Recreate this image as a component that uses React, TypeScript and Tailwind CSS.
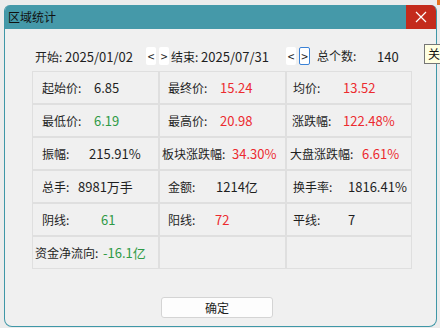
import React from "react";

interface Cell {
  label: string;
  value: string;
  color?: "red" | "green";
  pl: number;
  lw: number;
}

const font = { fontFamily: '"Noto Sans CJK SC", "Noto Sans", sans-serif' };

const rows: Cell[][] = [
  [
    { label: "起始价:", value: "6.85", pl: 9, lw: 52 },
    { label: "最终价:", value: "15.24", color: "red", pl: 8, lw: 52 },
    { label: "均价:", value: "13.52", color: "red", pl: 6, lw: 50 },
  ],
  [
    { label: "最低价:", value: "6.19", color: "green", pl: 9, lw: 52 },
    { label: "最高价:", value: "20.98", color: "red", pl: 8, lw: 52 },
    { label: "涨跌幅:", value: "122.48%", color: "red", pl: 5, lw: 51 },
  ],
  [
    { label: "振幅:", value: "215.91%", pl: 9, lw: 47 },
    { label: "板块涨跌幅:", value: "34.30%", color: "red", pl: 2, lw: 70 },
    { label: "大盘涨跌幅:", value: "6.61%", color: "red", pl: 3, lw: 72 },
  ],
  [
    { label: "总手:", value: "8981万手", pl: 9, lw: 36 },
    { label: "金额:", value: "1214亿", pl: 8, lw: 48 },
    { label: "换手率:", value: "1816.41%", pl: 6, lw: 55 },
  ],
  [
    { label: "阴线:", value: "61", color: "green", pl: 9, lw: 59 },
    { label: "阳线:", value: "72", color: "red", pl: 8, lw: 47 },
    { label: "平线:", value: "7", pl: 6, lw: 55 },
  ],
  [
    { label: "资金净流向:", value: "-16.1亿", color: "green", pl: 2, lw: 68 },
    { label: "", value: "", pl: 0, lw: 0 },
    { label: "", value: "", pl: 0, lw: 0 },
  ],
];

function ArrowBtn({ ch, focused }: { ch: string; focused?: boolean }) {
  return (
    <div
      className={`flex h-[18px] items-center justify-center rounded-[2px] bg-white text-[12px] leading-none text-[#222] ${
        focused ? "w-[11px] border border-[#3b82d6]" : "w-[10px]"
      }`}
    >
      {ch}
    </div>
  );
}

export default function App() {
  return (
    <div className="relative w-[440px] h-[328px] overflow-hidden bg-[#ececec] text-[12px] text-[#1f1f1f]" style={font}>
      <div className="absolute right-0 top-0 h-[5px] w-[3px] bg-[#e8731e]" />
      <div className="ml-[4px] mt-[5px] flex h-[322px] w-[433px] flex-col overflow-hidden rounded-t-[6px] rounded-b-[8px] border border-t-0 border-[#3f97a7] bg-[#f0f0f0]">
        {/* title bar */}
        <div className="flex h-[24px] shrink-0 items-center justify-between bg-[#4599a9]">
          <span className="pl-[3px] text-[12px] leading-none text-[#111]">区域统计</span>
          <div className="flex h-[24px] w-[30px] items-center justify-center bg-[#c42b1c]">
            <svg width="12" height="12" viewBox="0 0 12 12">
              <path d="M1 1 L11 11 M11 1 L1 11" stroke="#fff" strokeWidth="1.2" />
            </svg>
          </div>
        </div>

        {/* date row */}
        <div className="mt-[18px] flex h-[18px] items-center whitespace-nowrap pl-[30px] leading-none">
          <span className="w-[111px]">
            开始: <span className="text-[13px]">2025/01/02</span>
          </span>
          <ArrowBtn ch="<" />
          <div className="ml-[3px]">
            <ArrowBtn ch=">" />
          </div>
          <span className="ml-[2px] w-[115px]">
            结束: <span className="text-[13px]">2025/07/31</span>
          </span>
          <ArrowBtn ch="<" />
          <div className="ml-[3px]">
            <ArrowBtn ch=">" focused />
          </div>
          <span className="ml-[7px] w-[60px]">总个数:</span>
          <span className="text-[13px]">140</span>
        </div>

        {/* stats grid */}
        <div className="ml-[27px] mt-[6px] grid w-[380px] grid-cols-[127px_127px_126px]">
          {rows.map((row, ri) =>
            row.map((c, ci) => (
              <div
                key={`${ri}-${ci}`}
                className="flex h-[33px] items-center whitespace-nowrap border border-[#dfdfdf] leading-none"
                style={{ paddingLeft: c.pl }}
              >
                <span className="shrink-0" style={{ width: c.lw }}>
                  {c.label}
                </span>
                <span
                  className={`text-[13px] ${
                    c.color === "red" ? "text-[#ec2a2f]" : c.color === "green" ? "text-[#2f9a46]" : "text-[#1f1f1f]"
                  }`}
                >
                  {c.value}
                </span>
              </div>
            ))
          )}
        </div>

        {/* ok button */}
        <div className="mt-[28px] pl-[156px]">
          <button className="flex h-[21px] w-[112px] items-center justify-center rounded-[3px] border border-[#d4d4d4] bg-[#fdfdfd] text-[12px] leading-none text-[#1f1f1f]">
            确定
          </button>
        </div>
      </div>

      {/* tooltip */}
      <div className="absolute left-[424px] top-[44px] flex h-[20px] w-[30px] items-center border border-[#767676] bg-[#ffffe1] pl-[3px] text-[12px] leading-none text-[#111]">
        关
      </div>
    </div>
  );
}
